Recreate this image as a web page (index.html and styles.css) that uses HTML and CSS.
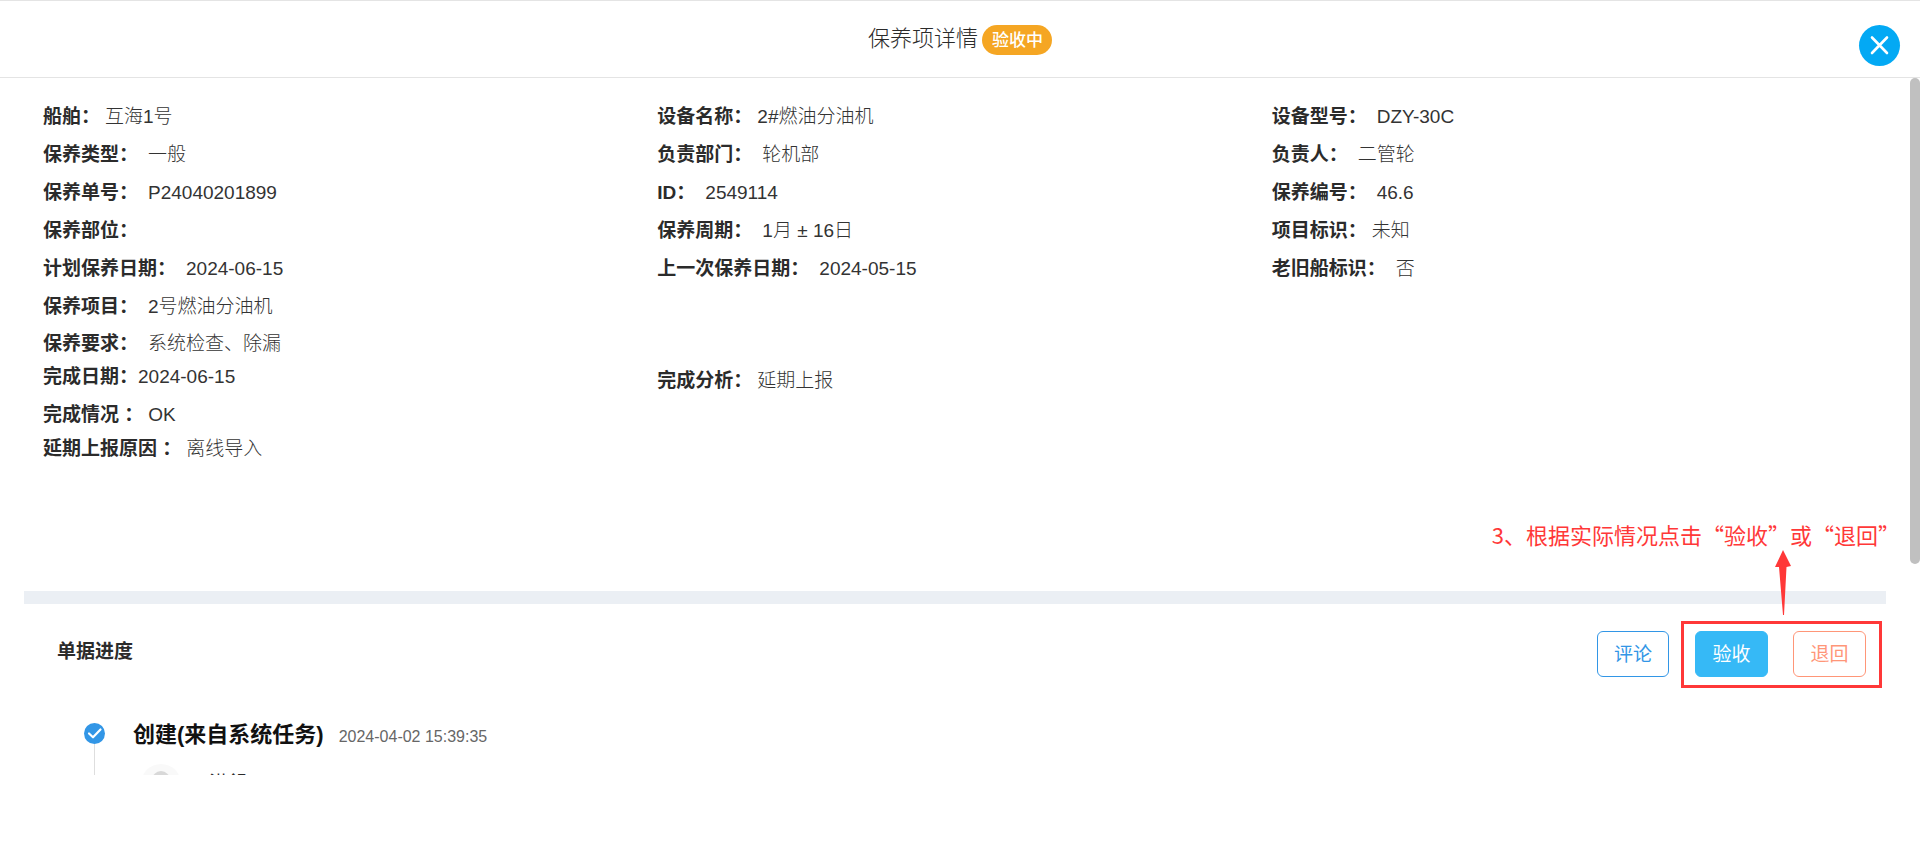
FILE: index.html
```html
<!DOCTYPE html>
<html lang="zh-CN">
<head>
<meta charset="utf-8">
<title>保养项详情</title>
<link rel="stylesheet" href="styles.css">
</head>
<body>
<main class="dialog">
  <header class="dialog-header">
    <h1 class="dialog-title">保养项详情</h1>
    <span class="badge">验收中</span>
    <button class="close" type="button" aria-label="关闭">
      <svg viewBox="0 0 41 41" width="41" height="41" aria-hidden="true"><path d="M13 12.500 28 28M28 12.500 13 28" fill="none" stroke="#fff" stroke-width="2.600" stroke-linecap="round"/></svg>
    </button>
  </header>
  <div class="dialog-body">
    <dl class="details">
      <div class="field near"><dt>船舶：</dt><dd>互海1号</dd></div>
      <div class="field near"><dt>设备名称：</dt><dd>2#燃油分油机</dd></div>
      <div class="field"><dt>设备型号：</dt><dd>DZY-30C</dd></div>
      <div class="field"><dt>保养类型：</dt><dd>一般</dd></div>
      <div class="field"><dt>负责部门：</dt><dd>轮机部</dd></div>
      <div class="field"><dt>负责人：</dt><dd>二管轮</dd></div>
      <div class="field"><dt>保养单号：</dt><dd>P24040201899</dd></div>
      <div class="field"><dt>ID：</dt><dd>2549114</dd></div>
      <div class="field"><dt>保养编号：</dt><dd>46.6</dd></div>
      <div class="field"><dt>保养部位：</dt><dd></dd></div>
      <div class="field"><dt>保养周期：</dt><dd>1月 ± 16日</dd></div>
      <div class="field near"><dt>项目标识：</dt><dd>未知</dd></div>
      <div class="field"><dt>计划保养日期：</dt><dd>2024-06-15</dd></div>
      <div class="field"><dt>上一次保养日期：</dt><dd>2024-05-15</dd></div>
      <div class="field"><dt>老旧船标识：</dt><dd>否</dd></div>
      <div class="field wide"><dt>保养项目：</dt><dd>2号燃油分油机</dd></div>
      <div class="field wide"><dt>保养要求：</dt><dd>系统检查、除漏</dd></div>
    </dl>
    <div class="results">
      <dl class="result-column">
        <div class="field compact flush"><dt>完成日期：</dt><dd>2024-06-15</dd></div>
        <div class="field near"><dt>完成情况 ：</dt><dd>OK</dd></div>
        <div class="field compact near"><dt>延期上报原因 ：</dt><dd>离线导入</dd></div>
      </dl>
      <dl class="result-column">
        <div class="field near"><dt>完成分析：</dt><dd>延期上报</dd></div>
      </dl>
    </div>
    <p class="note">3、根据实际情况点击“验收”或“退回”
      <svg class="note-arrow" viewBox="0 0 18 66" width="18" height="66" aria-hidden="true"><path d="M9 0 17 16 12.500 17 10 65H9L5 17H1Z" fill="#ff3838"/></svg>
    </p>
    <section class="progress">
      <div class="progress-bar">
        <h2 class="progress-title">单据进度</h2>
        <div class="actions">
          <button class="btn btn-comment" type="button">评论</button>
          <div class="marked">
            <button class="btn btn-accept" type="button">验收</button>
            <button class="btn btn-return" type="button">退回</button>
          </div>
        </div>
      </div>
      <ol class="timeline">
        <li class="step">
          <div class="step-rail">
            <svg viewBox="0 0 21 21" width="21" height="21" aria-hidden="true"><circle cx="10.500" cy="10.500" r="10.500" fill="#3296e6"/><path d="M5 10.500 9 14.300 16.500 6.500" fill="none" stroke="#fff" stroke-width="2.200" stroke-linecap="round" stroke-linejoin="round"/></svg>
          </div>
          <div class="step-content">
            <div class="step-head"><h3 class="step-title">创建(来自系统任务)</h3><time class="step-time">2024-04-02 15:39:35</time></div>
            <div class="person">
              <svg viewBox="0 0 40 40" width="40" height="40" aria-hidden="true"><circle cx="20" cy="20" r="20" fill="#f9f9f9"/><circle cx="20" cy="16" r="9" fill="#d8d8d8"/><path d="M5 33a16 12 0 0 1 30 0A20 20 0 0 1 5 33Z" fill="#d8d8d8"/></svg>
              <span>洪舒</span>
            </div>
          </div>
        </li>
      </ol>
    </section>
    <div class="scroll-thumb"></div>
  </div>
</main>
</body>
</html>
```

FILE: styles.css
```css
* {
  box-sizing: border-box;
}

body {
  margin: 0;
  background: #fff;
  color: #2b2b2b;
  font-family: "Liberation Sans", "Noto Sans CJK SC", sans-serif;
  font-size: 19px;
  line-height: 30px;
}

h1, h2, h3, p, dl, dd, ol {
  margin: 0;
  padding: 0;
}

button {
  font: inherit;
  padding: 0;
  cursor: pointer;
}

svg {
  display: block;
}

.dialog-header {
  position: relative;
  display: flex;
  justify-content: center;
  align-items: flex-start;
  gap: 4px;
  height: 78px;
  padding-top: 24px;
  border-top: 1px solid #e4e4e4;
  border-bottom: 1px solid #e4e4e4;
}

.dialog-title {
  font-size: 22px;
  font-family: "Liberation Sans", "Noto Sans CJK SC Light", "Noto Sans CJK SC", sans-serif;
  font-weight: 300;
  line-height: 28px;
}

.badge {
  padding: 1px 9px 0 10px;
  border-radius: 15px;
  background: #f5a623;
  color: #fff;
  font-size: 17px;
  font-weight: 500;
  line-height: 29px;
}

.close {
  position: absolute;
  top: 24px;
  right: 20px;
  border: 0;
  border-radius: 50%;
  background: #03a9f4;
}

.dialog-body {
  position: relative;
  height: 697px;
  padding: 20px 34px 0 24px;
  overflow: hidden;
}

.details,
.results {
  display: grid;
  grid-template-columns: repeat(3, 1fr);
  padding-left: 19px;
}

.field {
  display: flex;
  gap: 10px;
  line-height: 38px;
}

.field dt {
  font-weight: 700;
}

.field dd {
  color: #333;
  font-family: "Liberation Sans", "Noto Sans CJK SC Light", "Noto Sans CJK SC", sans-serif;
  font-weight: 300;
}

.near {
  gap: 5px;
}

.flush {
  gap: 0;
}

.wide {
  grid-column: 1 / -1;
  line-height: 37px;
}

.compact {
  line-height: 30px;
}

.compact.flush {
  margin-bottom: 4px;
}

.note {
  position: absolute;
  top: 441px;
  right: 20px;
  color: #ff3838;
  font-family: "Noto Sans CJK SC", sans-serif;
  font-size: 22px;
}

.note-arrow {
  position: absolute;
  top: 31px;
  right: 108px;
}

.progress {
  margin-top: 127px;
  border-top: 13px solid #ebeff4;
}

.progress-bar {
  display: flex;
  justify-content: space-between;
  align-items: flex-start;
  padding: 17px 4px 0 33px;
}

.progress-title {
  padding-top: 16px;
  font-size: 19px;
  font-weight: 700;
}

.actions {
  display: flex;
  align-items: flex-start;
  gap: 12px;
}

.marked {
  display: flex;
  gap: 25px;
  padding: 7px 13px 8px 11px;
  border: 3px solid #ff3838;
}

.btn {
  width: 73px;
  height: 46px;
  padding-top: 2px;
  border: 1px solid;
  border-radius: 6px;
  background: #fff;
}

.btn-comment {
  width: 72px;
  margin-top: 10px;
  color: #3296e6;
}

.btn-accept {
  border-color: #36b9f6;
  background: #36b9f6;
  color: #fff;
}

.btn-return {
  color: #ff9678;
}

.timeline {
  list-style: none;
  padding: 31px 0 0 60px;
}

.step {
  display: flex;
  gap: 28px;
}

.step-rail {
  display: flex;
  flex-direction: column;
  align-items: center;
  padding-top: 4px;
}

.step-rail::after {
  content: "";
  flex: 1;
  width: 1px;
  background: #dedede;
}

.step-head {
  display: flex;
  align-items: baseline;
  gap: 15px;
  padding-top: 1px;
}

.step-title {
  color: #111;
  font-size: 22px;
  font-weight: 700;
}

.step-time {
  color: #666;
  font-size: 16px;
}

.person {
  display: flex;
  align-items: center;
  gap: 28px;
  padding: 12px 0 20px 8px;
}

.scroll-thumb {
  position: absolute;
  top: 0;
  right: 0;
  width: 10px;
  height: 486px;
  border-radius: 5px;
  background: #c0c0c0;
}
```
